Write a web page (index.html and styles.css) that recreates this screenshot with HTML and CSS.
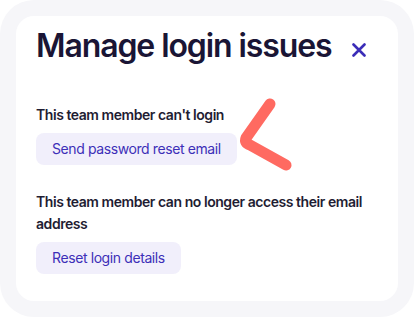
FILE: index.html
```html
<!DOCTYPE html>
<html lang="en">
<head>
<meta charset="UTF-8" />
<meta name="viewport" content="width=device-width, initial-scale=1" />
<title>Manage login issues</title>
<link rel="stylesheet" href="styles.css">
</head>
<body>
  <div class="frame">
    <main class="card" role="dialog" aria-labelledby="title">
      <header class="card-header">
        <h1 id="title">Manage login issues</h1>
        <button type="button" class="close" aria-label="Close">
          <svg width="14" height="14" viewBox="0 0 14 14" aria-hidden="true">
            <path d="M1.5 1.5 L12.5 12.5 M12.5 1.5 L1.5 12.5" stroke="currentColor" stroke-width="2.6" stroke-linecap="round" fill="none"/>
          </svg>
        </button>
      </header>

      <section class="issue">
        <p class="issue-label">This team member can't login</p>
        <button type="button" class="action">Send password reset email</button>
      </section>

      <section class="issue">
        <p class="issue-label">This team member can no longer access their email address</p>
        <button type="button" class="action">Reset login details</button>
      </section>

      <svg class="pointer" width="70" height="90" viewBox="0 0 70 90" aria-hidden="true">
        <path d="M38 14 L14 48 Q12 53 18 55 L54 75" stroke="#ff6a61" stroke-width="11" stroke-linecap="round" stroke-linejoin="round" fill="none"/>
      </svg>
    </main>
  </div>
</body>
</html>
```

FILE: styles.css
```css
* {
  box-sizing: border-box;
}

body {
  margin: 0;
  background: #fff;
  font-family: 'Inter', 'Noto Sans', sans-serif;
  color: #1c1a33;
}

.frame {
  height: 317px;
  padding: 16px 16px 16px;
  background: #f6f6f9;
  border-radius: 34px;
}

.card {
  position: relative;
  height: 100%;
  background: #fff;
  border-radius: 18px;
  padding: 10px 20px 0;
}

.card-header {
  display: flex;
  align-items: center;
  justify-content: space-between;
  padding-right: 8px;
  margin-bottom: 38px;
}

h1 {
  margin: 0;
  font-size: 32px;
  line-height: 40px;
  font-weight: 600;
  letter-spacing: -1.1px;
  color: #1a1535;
  white-space: nowrap;
}

.close {
  display: flex;
  margin-top: 7px;
  padding: 4px;
  background: none;
  border: none;
  color: #3b2db8;
  cursor: pointer;
}

.issue {
  margin-bottom: 26px;
}

.issue-label {
  margin: 0 0 7px;
  font-size: 14px;
  line-height: 22px;
  font-weight: 600;
  letter-spacing: -0.45px;
  color: #1f1d33;
  max-width: 340px;
}

.action {
  font-family: inherit;
  font-size: 14px;
  line-height: 20px;
  letter-spacing: -0.4px;
  padding: 6px 16px;
  background: #f1effb;
  color: #3d2fb8;
  border: none;
  border-radius: 8px;
  cursor: pointer;
}

.action:hover {
  background: #e6e2f8;
}

.pointer {
  position: absolute;
  left: 216px;
  top: 74px;
}
```
